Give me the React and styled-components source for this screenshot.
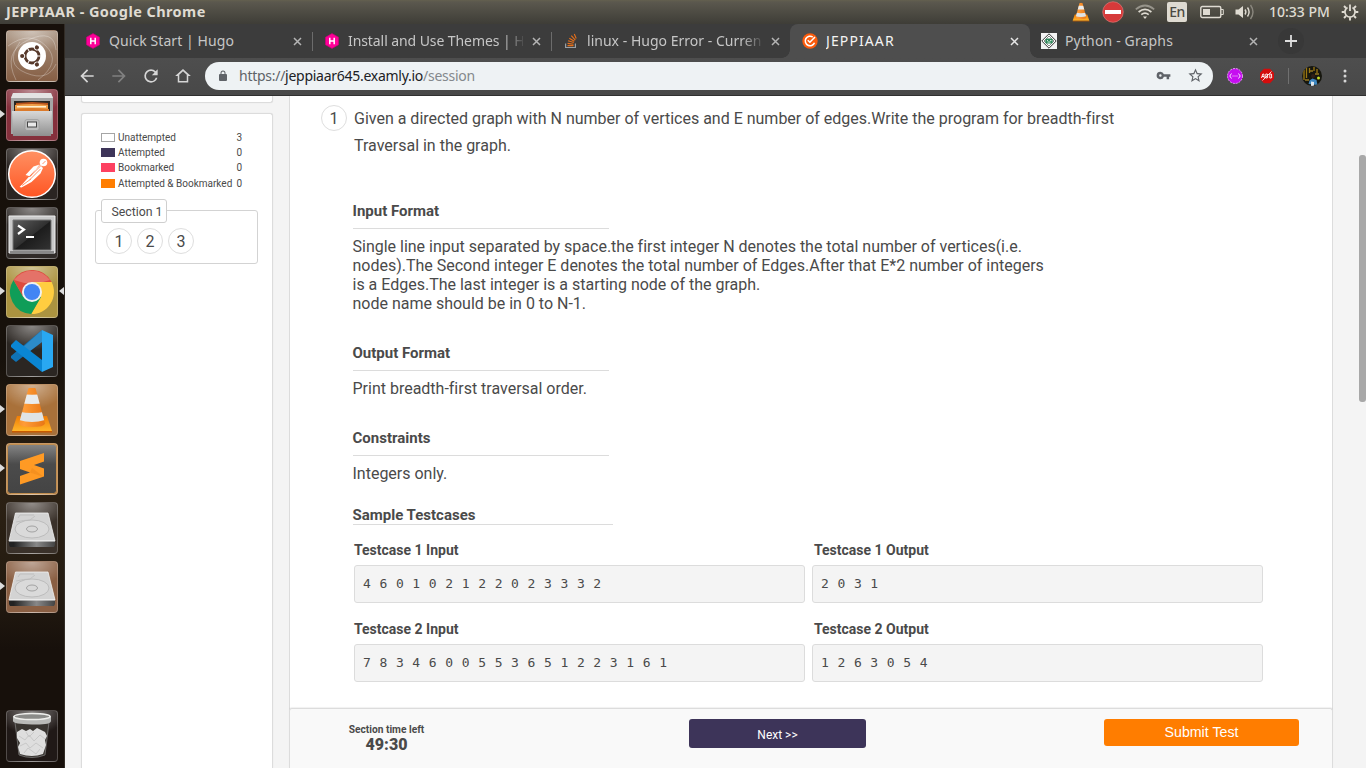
import React from "react";
import styled, { createGlobalStyle } from "styled-components";

const ui = '"Noto Sans", "Open Sans", sans-serif';

const Global = createGlobalStyle`
  * { box-sizing: border-box; }
  body { margin: 0; overflow: hidden; font-family: Roboto, "Liberation Sans", sans-serif; color: #4a4a4a; }
  svg { display: block; flex: none; }
`;

const Desktop = styled.div`
  width: 1366px;
  height: 768px;
  display: flex;
  flex-direction: column;
  overflow: hidden;
  background: #17100b;
`;

const Panel = styled.header`
  height: 24px;
  flex: none;
  display: flex;
  align-items: center;
  justify-content: space-between;
  padding: 0 7px 0 6px;
  background: linear-gradient(#64604f 0, #5b584e 2px, #3e3d37 100%);
  color: #dfdbd2;
  font: 500 14px/24px ${ui};
`;
const WindowTitle = styled.span`
  font-size: 14.5px;
  line-height: 22px;
  padding-bottom: 2px;
  font-weight: 700;
  white-space: nowrap;
  letter-spacing: 0.42px;
`;
const Tray = styled.div`
  display: flex;
  align-items: center;
`;
const TrayItem = styled.span`
  width: ${(p) => p.$w || 32}px;
  display: flex;
  justify-content: center;
`;
const Lang = styled.span`
  width: 20px;
  height: 20px;
  border-radius: 2px;
  background: #dfdbd2;
  color: #4a4943;
  font: 500 14px/20px ${ui};
  letter-spacing: -0.5px;
  text-align: center;
`;
const Clock = styled.span`
  margin: 0 12px 0 10px;
  width: 60px;
  white-space: nowrap;
`;

const Body = styled.div`
  flex: 1;
  display: flex;
  min-height: 0;
`;

const Launcher = styled.nav`
  width: 65px;
  flex: none;
  display: flex;
  flex-direction: column;
  gap: 7px;
  padding: 6px 0 6px 6px;
  border-right: 1px solid #322c26;
  background: linear-gradient(#17100b 0, #17110b 45%, #2c2114 62%, #241b11 76%, #17100b 84%);
`;
const Tile = styled.div`
  position: relative;
  width: 52px;
  height: 52px;
  flex: none;
  margin-top: ${(p) => (p.$last ? "auto" : 0)};
  border-radius: 4px;
  border: 1px solid rgba(255, 255, 255, 0.22);
  background: radial-gradient(ellipse 34px 24px at 50% 0, rgba(255, 255, 255, 0.45), rgba(255, 255, 255, 0) 100%), ${(p) => p.$bg};
  svg { margin: -1px; }
`;
const Pip = styled.i`
  position: absolute;
  top: 20px;
  ${(p) => (p.$right ? "right: -7px" : "left: -7px")};
  border: 5px solid transparent;
  border-top-width: 4px;
  border-bottom-width: 4px;
  border-${(p) => (p.$right ? "right" : "left")}-color: #dcdcdc;
  border-${(p) => (p.$right ? "left" : "right")}-width: 0;
`;

const Browser = styled.div`
  flex: 1;
  min-width: 0;
  display: flex;
  flex-direction: column;
`;
const TabStrip = styled.div`
  height: 34px;
  flex: none;
  display: flex;
  padding-left: 8px;
  background: #3c3c3c;
`;
const Tab = styled.div`
  width: ${(p) => (p.$active ? 240 : 239)}px;
  margin-right: ${(p) => (p.$active ? -1 : 0)}px;
  height: 34px;
  display: flex;
  align-items: center;
  padding: 0 ${(p) => (p.$active ? 11 : 10)}px 0 12px;
  position: relative;
  border-radius: 8px 8px 0 0;
  background: ${(p) => (p.$active ? "#4e4e4e" : "transparent")};
  color: ${(p) => (p.$active ? "#f4f4f4" : "#c6c6c6")};
  &::before {
    content: "";
    display: ${(p) => (p.$active ? "block" : "none")};
    position: absolute;
    left: -8px;
    right: -8px;
    bottom: 0;
    height: 8px;
    background:
      radial-gradient(circle at 0 0, transparent 7.5px, #4e4e4e 8px) left / 8px 8px no-repeat,
      radial-gradient(circle at 100% 0, transparent 7.5px, #4e4e4e 8px) right / 8px 8px no-repeat;
  }
  &::after {
    content: "";
    position: absolute;
    right: -1px;
    top: 8px;
    width: 1px;
    height: 19px;
    background: ${(p) => (p.$line ? "#6c6c6c" : "transparent")};
  }
`;
const TabTitle = styled.span`
  flex: 1;
  margin: 0 9px 0 8px;
  overflow: hidden;
  white-space: nowrap;
  font: 400 14px/34px ${ui};
  letter-spacing: ${(p) => p.$ls || 0}px;
  ${(p) => p.$fade && "mask-image: linear-gradient(90deg, #000 calc(100% - 20px), rgba(0, 0, 0, 0.12));"}
`;
const NewTab = styled.div`
  margin: 4px 0 0 10px;
  width: 26px;
  height: 26px;
  border-radius: 50%;
  background: #383838;
  display: flex;
  align-items: center;
  justify-content: center;
`;
const Toolbar = styled.div`
  height: 38px;
  flex: none;
  display: flex;
  align-items: center;
  padding: 0 0 2px 6px;
  border-bottom: 1px solid #303030;
  background: linear-gradient(#4e4e4e, #484848);
`;
const ToolButton = styled.span`
  width: ${(p) => p.$w || 32}px;
  flex: none;
  display: flex;
  justify-content: center;
`;
const Omnibox = styled.div`
  width: 1008px;
  flex: none;
  height: 28px;
  margin-left: 6px;
  border-radius: 14px;
  background: #eef2f4;
  display: flex;
  align-items: center;
  padding: 0 2px 0 12px;
`;
const Url = styled.span`
  flex: 1;
  margin-left: 10px;
  font: 400 14px/28px ${ui};
  letter-spacing: -0.27px;
  color: #84888c;
  b { font-weight: 400; color: #202124; }
  i { font-style: normal; color: #5f6368; }
`;
const Separator = styled.i`
  width: 1px;
  height: 16px;
  flex: none;
  margin: 0 6px 0 11px;
  background: #707070;
`;

const Viewport = styled.div`
  flex: 1;
  min-height: 0;
  display: flex;
  background: #f4f4f4;
  padding-left: 16px;
`;
const Sidebar = styled.aside`
  width: 192px;
  flex: none;
  display: flex;
  flex-direction: column;
`;
const Card = styled.section`
  border: 1px solid #dcdcdc;
  border-radius: 3px;
  background: #fff;
  box-shadow: 0 0 1px rgba(0, 0, 0, 0.12);
`;
const CardTail = styled(Card)`
  height: 7px;
  margin-bottom: 10px;
  border-top: 0;
  border-radius: 0 0 3px 3px;
`;
const StatusCard = styled(Card)`
  flex: 1;
  padding: 16px 14px 0 13px;
  border-bottom: 0;
  border-radius: 3px 3px 0 0;
`;
const Legend = styled.div`
  padding-left: 6px;
`;
const LegendRow = styled.div`
  height: ${(p) => p.$h}px;
  display: grid;
  grid-template-columns: 17px 118.5px auto;
  align-items: center;
  font-size: 10px;
  white-space: nowrap;
`;
const Swatch = styled.i`
  width: 14px;
  height: 9px;
  background: ${(p) => p.$c};
  border: 1px solid ${(p) => p.$line || p.$c};
`;
const SectionFrame = styled.div`
  margin-top: 18px;
  height: 54px;
  border: 1px solid #d3d3d3;
  border-radius: 3px;
  padding: 0 10px;
`;
const SectionLabel = styled.div`
  width: 66px;
  height: 24px;
  margin: -12px 0 5px -5px;
  border: 1px solid #cfcfcf;
  border-radius: 3px;
  background: #fff;
  font-size: 12.3px;
  line-height: 24px;
  text-align: center;
  padding-left: 6px;
  position: relative;
`;
const Bubbles = styled.div`
  display: flex;
  gap: 5px;
`;
const Bubble = styled.span`
  width: 26px;
  height: 26px;
  flex: none;
  border: 1px solid #dedede;
  border-radius: 50%;
  font-size: 16px;
  line-height: 25px;
  text-align: center;
`;

const Main = styled.main`
  width: 1044px;
  margin-left: 16px;
  display: flex;
  flex-direction: column;
  border: solid #dcdcdc;
  border-width: 0 1px;
  background: #fff;
`;
const Question = styled.div`
  flex: 1;
  min-height: 0;
  overflow: hidden;
  padding: 9px 69px 0 31px;
`;
const Prompt = styled.div`
  display: flex;
  height: 54px;
  margin-bottom: 43px;
  gap: 7px;
  p { margin: 0; width: 780px; font-size: 16px; line-height: 27px; letter-spacing: -0.005px; }
`;
const Block = styled.section`
  margin: 0 0 ${(p) => p.$gap ?? 31}px 31.5px;
  width: 720px;
`;
const Heading = styled.h3`
  margin: 0;
  width: ${(p) => p.$w || 256}px;
  height: ${(p) => p.$h || 27}px;
  border-bottom: 1px solid #dcdcdc;
  font-size: 15px;
  line-height: 18px;
  font-weight: 700;
`;
const Copy = styled.div`
  margin-top: 8px;
  font-size: 16px;
  line-height: 19px;
  letter-spacing: -0.005px;
`;
const Cases = styled.div`
  margin: 16px 0 0 33px;
  display: grid;
  grid-template-columns: 451px 451px;
  column-gap: 7px;
  row-gap: 17px;
`;
const CaseLabel = styled.h4`
  margin: 0;
  padding-left: ${(p) => p.$pad || 0}px;
  height: 24px;
  font-size: 14px;
  line-height: 18px;
  font-weight: 700;
`;
const CaseValue = styled.pre`
  margin: 0;
  height: 38px;
  padding-left: 8px;
  border: 1px solid #dcdcdc;
  border-radius: 3px;
  background: #f4f4f4;
  font: 13px/36px "DejaVu Sans Mono", monospace;
  letter-spacing: 0.4px;
`;
const Footer = styled.footer`
  height: 60px;
  margin: 0 -1px;
  flex: none;
  display: grid;
  grid-template-columns: 193px 1fr 195px;
  padding-right: 33px;
  border: 1px solid #dcdcdc;
  border-bottom: 0;
  border-radius: 3px 3px 0 0;
  background: #f9f9f9;
  box-shadow: 0 -1px 1px rgba(0, 0, 0, 0.06);
`;
const Timer = styled.div`
  padding-top: 14px;
  text-align: center;
  font-size: 10.2px;
  line-height: 14px;
  font-weight: 700;
  strong { display: block; font-size: 16px; line-height: 16px; }
`;
const Action = styled.button`
  width: ${(p) => p.$w}px;
  height: ${(p) => p.$h}px;
  margin: 10px 0 0 ${(p) => p.$x || 0}px;
  padding: ${(p) => p.$pt || 0}px 0 ${(p) => p.$pb || 0}px;
  border: 0;
  border-radius: 3px;
  color: #fff;
  background: ${(p) => p.$c};
  font-size: ${(p) => p.$fs}px;
  font-family: ${(p) => p.$ff};
`;
const ScrollTrack = styled.div`
  margin-left: auto;
  padding-top: 59px;
`;
const ScrollThumb = styled.div`
  width: 7px;
  height: 247px;
  border-radius: 3px;
  background: #a8a8a8;
`;

const Cone = ({ size, id, box = "0 0 52 52" }) => (
  <svg width={size} height={size} viewBox={box}>
    <defs>
      <linearGradient id={id} x1="0" x2="1"><stop offset="0" stopColor="#e8780f" /><stop offset=".35" stopColor="#ff9c38" /><stop offset="1" stopColor="#d95f00" /></linearGradient>
      <linearGradient id={id + "b"} x2="0" y2="1"><stop offset="0" stopColor="#ef7c05" /><stop offset="1" stopColor="#ffb52a" /></linearGradient>
      <clipPath id={id + "c"}><path d="M23 4h6q.5 0 .7.800L39 39.500q-1 3.500-13 3.500t-13-3.500L22.300 4.800Q22.500 4 23 4z" /></clipPath>
    </defs>
    <path d="M11 32h30l5 15H6z" fill={`url(#${id}b)`} />
    <path d="M6 47h40v1.500H6z" fill="#c75a00" />
    <g clipPath={`url(#${id}c)`}>
      <path d="M0 0h52v52H0z" fill={`url(#${id})`} />
      <path d="M10 10q16 1.500 32 0v9q-16 2-32 0z" fill="#e9ecee" />
      <path d="M10 27q16 4 32 0v8q-16 6-32 0z" fill="#dfe3e5" />
    </g>
  </svg>
);

const Ubuntu = () => (
  <svg width="52" height="52" viewBox="0 0 52 52">
    <g fill="none" stroke="#fff" strokeOpacity=".28">
      <path d="M2 16Q24 0 40 16T32 50" /><path d="M10 50Q-4 22 22 10T50 20" /><path d="M50 34Q42 52 20 43T14 12" />
    </g>
    <circle cx="26" cy="26" r="14" fill="#fff" />
    <g transform="translate(26 26)" fill="#56382a">
      <circle r="7" fill="none" stroke="#56382a" strokeWidth="2.800" />
      {[60, 180, 300].map((a) => (
        <g key={a} transform={`rotate(${a})`}>
          <circle cx="9.600" r="2.800" fill="#fff" /><circle cx="9.800" r="2.100" />
          <path d="M5 -.5h4v1H5z" fill="#fff" transform="rotate(60)" />
        </g>
      ))}
    </g>
  </svg>
);

const Files = () => (
  <svg width="52" height="52" viewBox="0 0 52 52">
    <defs><linearGradient id="cab" x2="0" y2="1"><stop stopColor="#d8d8d8" /><stop offset="1" stopColor="#8f8f8f" /></linearGradient></defs>
    <path d="M7 4h38l2 5v36H5V9z" fill="#a5a5a5" />
    <path d="M7 4h38l2 5H5z" fill="#e3e3e3" />
    <path d="M8 12h36v10H8z" fill="#282522" />
    <path d="M10 14l16-1 16 1v8H10z" fill="#b9541c" />
    <path d="M9 16q17-2 33 0v6H9z" fill="#f0a04a" /><path d="M11 17h29v1.500H11z" fill="#fff0cf" /><path d="M9 20q17-2 34 0v2H9z" fill="#db7a2b" />
    <path d="M6 22h40l-1 25H7z" fill="url(#cab)" />
    <rect x="19" y="30.500" width="14" height="11" rx="2" fill="#bdbdbd" stroke="#999" strokeWidth=".7" />
    <rect x="21.500" y="33" width="9" height="5" fill="#e9e9e9" stroke="#444" />
  </svg>
);

const Postman = () => (
  <svg width="52" height="52" viewBox="0 0 52 52">
    <defs><linearGradient id="pm" x2="0" y2="1"><stop stopColor="#ff9163" /><stop offset="1" stopColor="#ff5523" /></linearGradient></defs>
    <circle cx="26" cy="26" r="23.300" fill="url(#pm)" stroke="#fff" strokeWidth="1.500" />
    <circle cx="37.500" cy="14.500" r="3.800" fill="#fff" />
    <path d="M36.500 16l3-3" stroke="#ff7845" strokeWidth=".8" />
    <path d="M33.500 16.500l-6 2-8 8.500 5 1.500zM34 17l3 3-2.500 5.500-9 8.500-10 5.500-2-.5 3-3 7.500-8.500z" fill="#fff" />
    <path d="M19 28.500h5L34.500 18M24 31.500L34.500 21M16 37.500l9-6.500" fill="none" stroke="#ff7845" strokeWidth=".8" />
  </svg>
);

const Terminal = () => (
  <svg width="52" height="52" viewBox="0 0 52 52">
    <defs><linearGradient id="tm" x2="1" y2="1"><stop stopColor="#5d5d5d" /><stop offset=".5" stopColor="#303030" /><stop offset=".52" stopColor="#1c1c1c" /><stop offset="1" stopColor="#333" /></linearGradient></defs>
    <path d="M3 9h46v37H3z" fill="#c9c9c9" stroke="#eee" />
    <path d="M4 44h44v3H4z" fill="#888" />
    <path d="M7 13h38v30H7z" fill="url(#tm)" stroke="#777" />
    <path d="M12 18.500l6 4-6 4.500" fill="none" stroke="#fff" strokeWidth="2.200" /><path d="M20 30h8" stroke="#fff" strokeWidth="2" />
  </svg>
);

const Chrome = () => (
  <svg width="52" height="52" viewBox="0 0 52 52">
    <g transform="translate(26 26)">
      <path d="M0 -10H19.600A22.100 22.100 0 0 1 -.800 22L9 5z" fill="#ffcd40" />
      <path d="M-18.500 -12L-8.700 5 9 5-.8 22A22.100 22.100 0 0 1 -18.500 -12z" fill="#0f9d58" />
      <path d="M-18.500 -12A22 22 0 0 1 19.600 -10H0L-8.700 5z" fill="#dd4b3e" />
      <path d="M-18 -12A22 22 0 0 1 18 -12Q0 -5-18-12z" fill="#fff" opacity=".22" />
      <circle r="10" fill="#f1f1f1" /><circle r="8.100" fill="#4285f4" />
    </g>
  </svg>
);

const Code = () => (
  <svg width="52" height="52" viewBox="0 0 52 52">
    <path d="M36 5L47 10V42L36 47z" fill="#29a8f2" />
    <path d="M36 5V17L10 37 5 33V31z" fill="#0f72b5" />
    <path d="M36 5V17L20 29 14 25z" fill="#4aa3dc" opacity=".5" />
    <path d="M5 20L10 15 36 35V47L5 22z" fill="#0a86d4" />
  </svg>
);

const Sublime = () => (
  <svg width="52" height="52" viewBox="0 0 52 52">
    <defs><linearGradient id="sb" x2="0" y2="1"><stop stopColor="#858585" /><stop offset=".4" stopColor="#4b4b4b" /><stop offset="1" stopColor="#444" /></linearGradient></defs>
    <rect x="1.500" y="1.500" width="49" height="49" rx="3" fill="url(#sb)" stroke="#c18d4e" />
    <path d="M14 18l24-8v8.500l-10 3.500 10 3.500v8l-24 8V33l10-3.500-10-3.500z" fill="#ff9a24" />
    <path d="M24 29.500l14 4.500-12-9z" fill="#d87410" opacity=".25" />
  </svg>
);

const Drive = ({ id }) => (
  <svg width="52" height="52" viewBox="0 0 52 52">
    <defs><linearGradient id={id} x1="0" x2="1"><stop offset=".1" stopColor="#222" /><stop offset=".6" stopColor="#888" /><stop offset="1" stopColor="#444" /></linearGradient></defs>
    <path d="M9.500 11h32.500l7 28H3z" fill="#d3d3d3" stroke="#f3f3f3" strokeWidth=".8" />
    <path d="M3 39h46v4l-1 2H4l-1-2z" fill={`url(#${id})`} /><path d="M3 38.500h46v1H3z" fill="#f5f5f5" />
    <ellipse cx="26" cy="27" rx="17" ry="9" fill="#dadada" stroke="#b5b5b5" strokeWidth=".8" />
    <ellipse cx="26" cy="27" rx="5.500" ry="3" fill="#d8d8d8" stroke="#a3a3a3" />
    <path d="M12 16l2-3h14M10 20q8-2 14-2l5-4" fill="none" stroke="#bbb" strokeWidth=".8" />
  </svg>
);

const Trash = () => (
  <svg width="52" height="52" viewBox="0 0 52 52">
    <path d="M9 12h34l-4 33q-13 5-26 0z" fill="#393531" stroke="#858585" strokeWidth=".7" />
    <path d="M11 22l5-3 4 2 4-2 3 2 4-3 8 4 2 4-2 4 1 5-3 9q-11 4-23 0l-2-7 2-4-3-5z" fill="#dedede" />
    <path d="M13 26l6 4 4-5 5 6 6-6 5 4M14 36l6-3 4 5 6-5 7 5M18 43l4-5 8 6 4-5M20 22l3 5 5-5" stroke="#c8c8c8" fill="none" />
    <path d="M7 6v5q0 3 19 3.500T45 11V6z" fill="#b9bab8" />
    <ellipse cx="26" cy="6.500" rx="18" ry="3" fill="#8b8b89" stroke="#eeeeec" strokeWidth="1.500" />
  </svg>
);

const Hugo = () => (
  <svg width="16" height="16" viewBox="0 0 16 16">
    <path d="M8 .6l6.500 3.600v7.600L8 15.400l-6.500-3.600V4.200z" fill="#ff0098" stroke="#c8007a" strokeWidth=".7" />
    <path d="M5.800 4.700v6.600M10.200 4.700v6.600M5.800 8h4.400" stroke="#fff" strokeWidth="1.500" />
  </svg>
);
const Stack = () => (
  <svg width="16" height="16" viewBox="0 0 16 16" fill="none">
    <path d="M2.600 10.500v4h9.800v-4" stroke="#9aa0a5" strokeWidth="1.200" />
    <path d="M4.500 12.600h6M4.600 10.400l5.900.8M5.100 7.800l5.700 1.700M6.300 5.200l5 3M8.300 2.700l4 4.400M11.300 1l1.900 4.500" stroke="#e8701a" strokeWidth="1.100" />
  </svg>
);
const Examly = () => (
  <svg width="16" height="16" viewBox="0 0 16 16">
    <circle cx="8" cy="8" r="7.700" fill="#fb5b0c" />
    <path d="M10.800 4A4.800 4.800 0 1 0 12.500 9.800" fill="none" stroke="#fff" strokeWidth="1.500" />
    <path d="M5.700 7.300l2.200 2L13 4" fill="none" stroke="#fff" strokeWidth="1.500" />
  </svg>
);
const Graphs = () => (
  <svg width="16" height="16" viewBox="0 0 16 16">
    <path d="M0 0h16v16H0z" fill="#f3f3f3" />
    <path d="M8 .8L15.200 8 8 15.200.8 8z" fill="#fff" stroke="#333" /><path d="M8 3L13 8l-5 5-5-5z" fill="none" stroke="#555" strokeWidth=".7" />
    <rect x="4.300" y="5.500" width="7.400" height="5" rx="1.500" fill="#2f8a5b" /><path d="M6 7.500h1M9 7.500h1.500M6.500 9h3" stroke="#cfe6d8" />
  </svg>
);
const Close = ({ c = "#b4b4b4" }) => (
  <svg width="9" height="9" viewBox="0 0 9 9"><path d="M1 1l7 7M8 1L1 8" stroke={c} strokeWidth="1.500" /></svg>
);
const Glyph = ({ d, c = "#d6d6d6", size = 20 }) => (
  <svg width={size} height={size} viewBox="0 0 24 24"><path d={d} fill={c} /></svg>
);

const glyphs = {
  back: "M20 11H7.830l5.590-5.590L12 4l-8 8 8 8 1.410-1.410L7.830 13H20v-2z",
  forward: "M12 4l-1.410 1.410L16.170 11H4v2h12.170l-5.580 5.590L12 20l8-8z",
  reload: "M17.650 6.350A7.958 7.958 0 0 0 12 4a8 8 0 1 0 7.730 10h-2.080A5.990 5.990 0 0 1 12 18a6 6 0 1 1 0-12c1.660 0 3.140.690 4.220 1.780L13 11h7V4l-2.350 2.350z",
  home: "M12 2.500L1.500 12H5v8.500h14V12h3.500L12 2.500zm5 16H7v-8.200l5-4.600 5 4.600v8.200z",
  lock: "M18 8h-1V6A5 5 0 0 0 7 6v2H6a2 2 0 0 0-2 2v10a2 2 0 0 0 2 2h12a2 2 0 0 0 2-2V10a2 2 0 0 0-2-2zM9 6a3 3 0 0 1 6 0v2H9V6z",
  key: "M12.650 10A5.990 5.990 0 0 0 7 6a6 6 0 1 0 5.650 8H17v4h4v-4h2v-4H12.650zM7 14a2 2 0 1 1 0-4 2 2 0 0 1 0 4z",
  star: "M22 9.240l-7.190-.62L12 2 9.190 8.630 2 9.240l5.460 4.730L5.820 21 12 17.270 18.180 21l-1.630-7.030L22 9.240zM12 15.400l-3.760 2.270 1-4.280-3.320-2.880 4.380-.38L12 6.100l1.710 4.040 4.380.38-3.320 2.880 1 4.280L12 15.400z",
};

const NoEntry = () => (
  <svg width="22" height="22" viewBox="0 0 22 22"><circle cx="11" cy="11" r="10.300" fill="#d63a3a" stroke="#e98080" strokeWidth=".6" /><path d="M3 9h16v4H3z" fill="#fff" /></svg>
);
const Wifi = () => (
  <svg width="20" height="16" viewBox="0 0 20 16" fill="none" stroke="#dfdbd2" strokeWidth="1.700">
    <path d="M.8 5.400Q10-2.400 19.200 5.400" stroke="#97948b" /><path d="M3.600 8Q10 2.600 16.400 8" /><path d="M6.300 10.700q3.700-3 7.400 0" /><path d="M8 12.500h4l-2 2.500z" fill="#dfdbd2" stroke="none" />
  </svg>
);
const Battery = () => (
  <svg width="24" height="14" viewBox="0 0 24 14"><rect x=".8" y="1.500" width="20" height="11" rx="1.500" fill="none" stroke="#dfdbd2" strokeWidth="1.400" /><path d="M3 4h7v6H3z" fill="#dfdbd2" /><path d="M21 4.500h2.300v5H21" fill="none" stroke="#dfdbd2" /></svg>
);
const Volume = () => (
  <svg width="20" height="16" viewBox="0 0 20 16" fill="none" stroke="#dfdbd2" strokeWidth="1.400"><path d="M.5 5.500h3L8 2v12l-4.500-3.500h-3z" fill="#dfdbd2" stroke="none" /><path d="M10 5.500q1.800 2.500 0 5M12.500 3.500q3.200 4.500 0 9" /><path d="M15.500 1q5 7 0 14" stroke="#8a877e" /></svg>
);
const Gear = () => (
  <svg width="18" height="18" viewBox="0 0 18 18" fill="none" stroke="#dfdbd2">
    <path d="M6.500 4.500A5.100 5.100 0 1 0 11.500 4.500" strokeWidth="1.800" /><path d="M9 1.500v6.500" strokeWidth="1.800" />
    <path d="M13 5l2-2M14.300 9h3M13 13l2 2M9 14.500v3M5 13l-2 2M3.700 9h-3M5 5L3 3" strokeWidth="1.900" />
  </svg>
);
const Purple = () => (
  <svg width="16" height="16" viewBox="0 0 16 16"><circle cx="8" cy="8" r="7.500" fill="#c60ef0" stroke="#e6a4f5" strokeDasharray="2 1" /><path d="M4.500 5.500L2.800 8l1.700 2.500M11.500 5.500L13.200 8l-1.700 2.500M5.500 8h1M7.500 8h1M9.500 8h1" stroke="#fff" strokeWidth=".9" fill="none" /></svg>
);
const AdBlock = () => (
  <svg width="16" height="16" viewBox="0 0 16 16"><path d="M5 .8h6L15 5v6l-4 4.200H5L1 11V5z" fill="#d40c0c" /><path d="M2.500 10l1.300-4h1l.5 4M3 8.500h2M6.800 10V6h1.500q1 1 0 2 1.300 1 0 2zM10.800 10V6h1.500q1 1 0 2 1.300 1 0 2z" fill="none" stroke="#fff" strokeWidth=".9" /><path d="M3.500 12.500l9-9" stroke="#fff" strokeWidth=".8" /></svg>
);
const Avatar = () => (
  <svg width="20" height="20" viewBox="0 0 20 20">
    <clipPath id="av"><circle cx="10" cy="10" r="10" /></clipPath>
    <g clipPath="url(#av)"><path d="M0 0h20v20H0z" fill="#17170f" /><path d="M2 4v10M4.500 1v11M7.500 2v5M12 1v4M15 3v4" stroke="#9c7812" strokeWidth="1.300" /><path d="M3 14h4M13 8h4M8 5h3" stroke="#77601c" strokeWidth="1.800" /><circle cx="16.500" cy="12" r="1.500" fill="#c6dd26" /><circle cx="11" cy="10" r="2" fill="#312019" /><path d="M6.500 18l1-3.500 3-2 4 1.500 1 5z" fill="#3e87c0" /><path d="M9 15.500l3 .5v4H9z" fill="#dfe7ee" /></g>
  </svg>
);

const apps = [
  { el: <Ubuntu />, bg: "linear-gradient(#a8927f, #865f45)" },
  { el: <Files />, bg: "#85303c", left: true },
  { el: <Postman />, bg: "#2b2522" },
  { el: <Terminal />, bg: "#302b28" },
  { el: <Chrome />, bg: "#ab9340", left: true, right: true },
  { el: <Code />, bg: "#2b2622" },
  { el: <Cone size={52} id="dock" />, bg: "#a9713a", left: true },
  { el: <Sublime />, bg: "#b67b3a", left: true },
  { el: <Drive id="d1" />, bg: "#3a312a" },
  { el: <Drive id="d2" />, bg: "#8a5f43", left: true },
  { el: <Trash />, bg: "#201917", last: true },
];

const tabs = [
  { icon: <Hugo />, title: "Quick Start | Hugo", line: true, ls: 0.08 },
  { icon: <Hugo />, title: "Install and Use Themes | H", line: true, fade: true, ls: -0.08 },
  { icon: <Stack />, title: "linux - Hugo Error - Curren", fade: true, ls: 0.02 },
  { icon: <Examly />, title: "JEPPIAAR", active: true, ls: 1.1 },
  { icon: <Graphs />, title: "Python - Graphs", ls: 0.15 },
];

const legend = [
  ["Unattempted", 3, "#fff", "#a5a5a5", 15],
  ["Attempted", 0, "#3d3459", "", 15],
  ["Bookmarked", 0, "#fd4161", "", 15],
  ["Attempted & Bookmarked", 0, "#ff7d00", "", 17],
];

const cases = [
  ["4 6 0 1 0 2 1 2 2 0 2 3 3 3 2", "2 0 3 1"],
  ["7 8 3 4 6 0 0 5 5 3 6 5 1 2 2 3 1 6 1", "1 2 6 3 0 5 4"],
];

export default function App() {
  return (
    <Desktop>
      <Global />
      <Panel>
        <WindowTitle>JEPPIAAR - Google Chrome</WindowTitle>
        <Tray>
          <TrayItem><Cone size={20} id="tray" box="2 2 48 48" /></TrayItem>
          <TrayItem><NoEntry /></TrayItem>
          <TrayItem><Wifi /></TrayItem>
          <TrayItem><Lang>En</Lang></TrayItem>
          <TrayItem $w={38}><Battery /></TrayItem>
          <TrayItem $w={28}><Volume /></TrayItem>
          <Clock>10:33 PM</Clock>
          <Gear />
        </Tray>
      </Panel>
      <Body>
        <Launcher>
          {apps.map((a, i) => (
            <Tile key={i} $bg={a.bg} $last={a.last}>
              {a.el}
              {a.left && <Pip />}
              {a.right && <Pip $right />}
            </Tile>
          ))}
        </Launcher>
        <Browser>
          <TabStrip>
            {tabs.map((t) => (
              <Tab key={t.title} $active={t.active} $line={t.line}>
                {t.icon}
                <TabTitle $fade={t.fade} $ls={t.ls}>{t.title}</TabTitle>
                <Close c={t.active ? "#e6e6e6" : undefined} />
              </Tab>
            ))}
            <NewTab><svg width="12" height="12" viewBox="0 0 12 12"><path d="M6 0v12M0 6h12" stroke="#dedede" strokeWidth="1.800" /></svg></NewTab>
          </TabStrip>
          <Toolbar>
            <ToolButton><Glyph d={glyphs.back} /></ToolButton>
            <ToolButton><Glyph d={glyphs.forward} c="#808080" /></ToolButton>
            <ToolButton><Glyph d={glyphs.reload} /></ToolButton>
            <ToolButton><Glyph d={glyphs.home} size={18} /></ToolButton>
            <Omnibox>
              <Glyph d={glyphs.lock} c="#5f6368" size={12} />
              <Url><i>https://</i><b>jeppiaar645.examly.io</b>/session</Url>
              <ToolButton><Glyph d={glyphs.key} c="#5f6368" size={15} /></ToolButton>
              <ToolButton><Glyph d={glyphs.star} c="#5f6368" size={17} /></ToolButton>
            </Omnibox>
            <ToolButton $w={44}><Purple /></ToolButton>
            <ToolButton $w={20}><AdBlock /></ToolButton>
            <Separator />
            <ToolButton $w={34}><Avatar /></ToolButton>
            <ToolButton $w={31}><svg width="4" height="14" viewBox="0 0 4 14" fill="#d6d6d6"><circle cx="2" cy="2" r="1.500" /><circle cx="2" cy="7" r="1.500" /><circle cx="2" cy="12" r="1.500" /></svg></ToolButton>
          </Toolbar>
          <Viewport>
            <Sidebar>
              <CardTail />
              <StatusCard>
                <Legend>
                  {legend.map(([name, n, c, line, h]) => (
                    <LegendRow key={name} $h={h}><Swatch $c={c} $line={line} /><span>{name}</span><span>{n}</span></LegendRow>
                  ))}
                </Legend>
                <SectionFrame>
                  <SectionLabel>Section 1</SectionLabel>
                  <Bubbles><Bubble>1</Bubble><Bubble>2</Bubble><Bubble>3</Bubble></Bubbles>
                </SectionFrame>
              </StatusCard>
            </Sidebar>
            <Main>
              <Question>
                <Prompt>
                  <Bubble>1</Bubble>
                  <p>Given a directed graph with N number of vertices and E number of edges.Write the program for breadth-first<br />Traversal in the graph.</p>
                </Prompt>
                <Block>
                  <Heading>Input Format</Heading>
                  <Copy>
                    Single line input separated by space.the first integer N denotes the total number of vertices(i.e.<br />
                    nodes).The Second integer E denotes the total number of Edges.After that E*2 number of integers<br />
                    is a Edges.The last integer is a starting node of the graph.<br />
                    node name should be in 0 to N-1.
                  </Copy>
                </Block>
                <Block>
                  <Heading>Output Format</Heading>
                  <Copy>Print breadth-first traversal order.</Copy>
                </Block>
                <Block $gap={23}>
                  <Heading>Constraints</Heading>
                  <Copy>Integers only.</Copy>
                </Block>
                <Block $gap={0}>
                  <Heading $w={260} $h={19}>Sample Testcases</Heading>
                </Block>
                <Cases>
                  {cases.map(([input, output], i) => (
                    <React.Fragment key={input}>
                      <div><CaseLabel>Testcase {i + 1} Input</CaseLabel><CaseValue>{input}</CaseValue></div>
                      <div><CaseLabel $pad={2}>Testcase {i + 1} Output</CaseLabel><CaseValue>{output}</CaseValue></div>
                    </React.Fragment>
                  ))}
                </Cases>
              </Question>
              <Footer>
                <Timer>Section time left<strong>49:30</strong></Timer>
                <Action $w={177} $h={29} $x={206} $pt={2} $c="#3d3459" $fs={12} $ff="Roboto, sans-serif">Next &gt;&gt;</Action>
                <Action $w={195} $h={27} $pb={2} $c="#ff7d00" $fs={14.2} $ff='"Liberation Sans", sans-serif'>Submit Test</Action>
              </Footer>
            </Main>
            <ScrollTrack><ScrollThumb /></ScrollTrack>
          </Viewport>
        </Browser>
      </Body>
    </Desktop>
  );
}
